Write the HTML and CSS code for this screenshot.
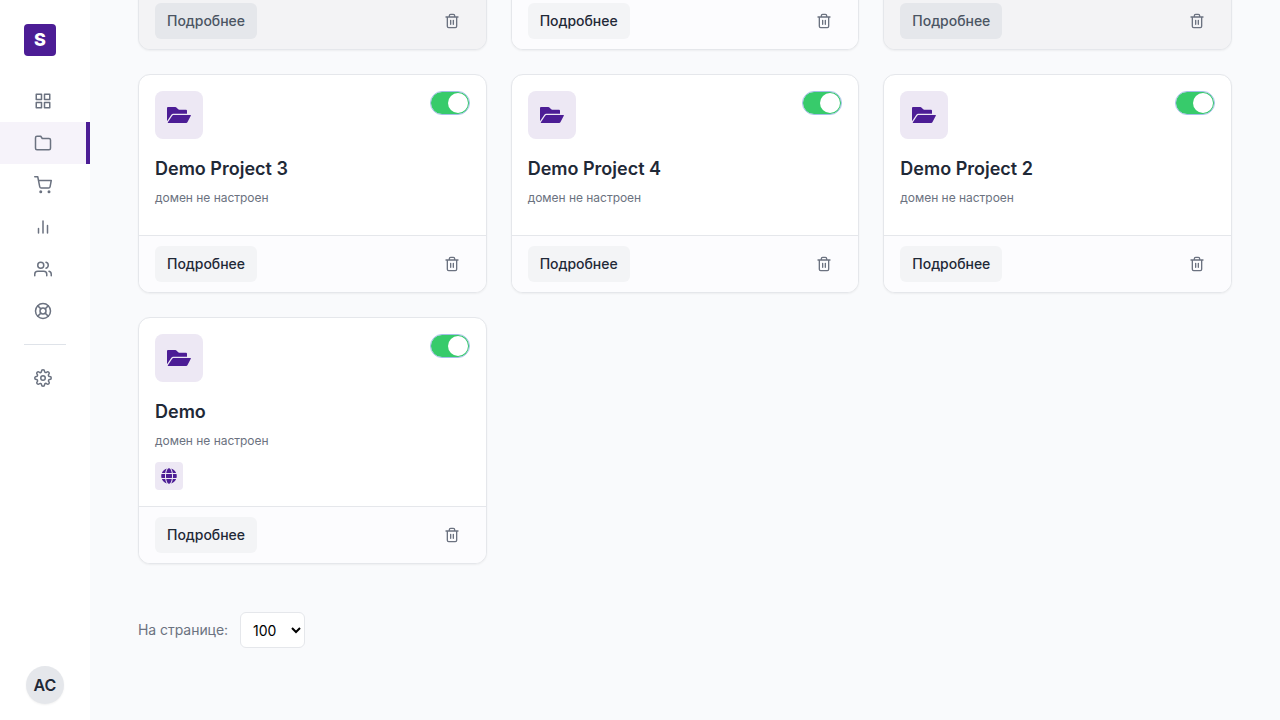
FILE: index.html
```html
<!DOCTYPE html>
<html lang="ru">
<head>
<meta charset="utf-8">
<title>Проекты</title>
<link rel="stylesheet" href="styles.css">
</head>
<body>
<svg class="sprite" aria-hidden="true">
  <symbol id="grid" viewBox="0 0 24 24"><rect x="3" y="3" width="7" height="7"/><rect x="14" y="3" width="7" height="7"/><rect x="14" y="14" width="7" height="7"/><rect x="3" y="14" width="7" height="7"/></symbol>
  <symbol id="folder" viewBox="0 0 24 24"><path d="M22 19a2 2 0 0 1-2 2H4a2 2 0 0 1-2-2V5a2 2 0 0 1 2-2h5l2 3h9a2 2 0 0 1 2 2z"/></symbol>
  <symbol id="cart" viewBox="0 0 24 24"><circle cx="9" cy="21" r="1"/><circle cx="20" cy="21" r="1"/><path d="M1 1h4l2.68 13.39a2 2 0 0 0 2 1.61h9.72a2 2 0 0 0 2-1.61L23 6H6"/></symbol>
  <symbol id="bars" viewBox="0 0 24 24"><path d="M18 20V10M12 20V4M6 20v-6"/></symbol>
  <symbol id="users" viewBox="0 0 24 24"><path d="M17 21v-2a4 4 0 0 0-4-4H5a4 4 0 0 0-4 4v2"/><circle cx="9" cy="7" r="4"/><path d="M23 21v-2a4 4 0 0 0-3-3.87M16 3.13a4 4 0 0 1 0 7.75"/></symbol>
  <symbol id="help" viewBox="0 0 24 24"><circle cx="12" cy="12" r="10"/><circle cx="12" cy="12" r="4"/><path d="M4.93 4.93l4.24 4.24M14.83 14.83l4.24 4.24M14.83 9.17l4.24-4.24M4.93 19.07l4.24-4.24"/></symbol>
  <symbol id="gear" viewBox="0 0 24 24"><circle cx="12" cy="12" r="3"/><path d="M19.4 15a1.65 1.65 0 0 0 .33 1.82l.06.06a2 2 0 0 1 0 2.83 2 2 0 0 1-2.83 0l-.06-.06a1.65 1.65 0 0 0-1.82-.33 1.65 1.65 0 0 0-1 1.51V21a2 2 0 0 1-2 2 2 2 0 0 1-2-2v-.09A1.65 1.65 0 0 0 9 19.4a1.65 1.65 0 0 0-1.82.33l-.06.06a2 2 0 0 1-2.83 0 2 2 0 0 1 0-2.83l.06-.06a1.65 1.65 0 0 0 .33-1.82 1.65 1.65 0 0 0-1.51-1H3a2 2 0 0 1-2-2 2 2 0 0 1 2-2h.09A1.65 1.65 0 0 0 4.6 9a1.65 1.65 0 0 0-.33-1.82l-.06-.06a2 2 0 0 1 0-2.83 2 2 0 0 1 2.83 0l.06.06a1.65 1.65 0 0 0 1.82.33H9a1.65 1.65 0 0 0 1-1.51V3a2 2 0 0 1 2-2 2 2 0 0 1 2 2v.09a1.65 1.65 0 0 0 1 1.51 1.65 1.65 0 0 0 1.82-.33l.06-.06a2 2 0 0 1 2.83 0 2 2 0 0 1 0 2.83l-.06.06a1.65 1.65 0 0 0-.33 1.82V9a1.65 1.65 0 0 0 1.51 1H21a2 2 0 0 1 2 2 2 2 0 0 1-2 2h-.09a1.65 1.65 0 0 0-1.51 1z"/></symbol>
  <symbol id="trash" viewBox="0 0 24 24"><path d="M3 6h18M19 6v14a2 2 0 0 1-2 2H7a2 2 0 0 1-2-2V6m3 0V4a2 2 0 0 1 2-2h4a2 2 0 0 1 2 2v2M10 11v6M14 11v6"/></symbol>
  <symbol id="folder-open" viewBox="0 0 24 16"><path d="M0 14.2V1Q0 0 1 0H8.4Q9 0 9.4.4L11.2 2.3Q11.6 2.7 12.2 2.7H19Q20 2.700 20 3.700V6.800H6.300Q4.900 6.800 4.200 7.900ZM5.200 8.700Q5.600 8 6.400 8H23.400Q24.200 8 23.800 8.800L20.400 15.300Q20 16 19.200 16H1.300Q.5 16 .9 15.300Z"/></symbol>
  <symbol id="globe" viewBox="0 0 496 512"><path d="M336.5 160C322 70.7 287.8 8 248 8s-74 62.7-88.500 152h177zM152 256c0 22.200 1.200 43.500 3.300 64h185.300c2.100-20.500 3.300-41.800 3.300-64s-1.200-43.500-3.300-64H155.300c-2.100 20.500-3.300 41.800-3.300 64zm324.700-96c-28.600-67.900-86.500-120.400-158-141.600 24.400 33.800 41.200 84.700 50 141.600h108zM177.200 18.400C105.800 39.600 47.800 92.100 19.300 160h108c8.700-56.900 25.500-107.800 49.900-141.600zM487.400 192H372.700c2.100 21 3.300 42.500 3.300 64s-1.200 43-3.300 64h114.600c5.500-20.500 8.600-41.800 8.600-64s-3.100-43.500-8.500-64zM120 256c0-21.500 1.200-43 3.300-64H8.600C3.200 212.500 0 233.800 0 256s3.200 43.500 8.600 64h114.600c-2-21-3.200-42.500-3.200-64zm39.500 96c14.500 89.300 48.700 152 88.500 152s74-62.700 88.500-152h-177zm159.300 141.600c71.400-21.200 129.400-73.700 158-141.600h-108c-8.800 56.900-25.600 107.800-50 141.600zM19.300 352c28.600 67.900 86.500 120.400 158 141.600-24.400-33.800-41.200-84.700-50-141.600h-108z"/></symbol>
</svg>
<div class="app">
  <aside class="sidebar">
    <div class="logo">S</div>
    <nav class="nav">
      <a class="nav-item"><svg class="line-icon"><use href="#grid"/></svg></a>
      <a class="nav-item active"><svg class="line-icon"><use href="#folder"/></svg></a>
      <a class="nav-item"><svg class="line-icon"><use href="#cart"/></svg></a>
      <a class="nav-item"><svg class="line-icon"><use href="#bars"/></svg></a>
      <a class="nav-item"><svg class="line-icon"><use href="#users"/></svg></a>
      <a class="nav-item"><svg class="line-icon"><use href="#help"/></svg></a>
      <hr class="divider">
      <a class="nav-item"><svg class="line-icon"><use href="#gear"/></svg></a>
    </nav>
    <div class="avatar">AC</div>
  </aside>
  <main class="main">
    <section class="cards">
      <article class="card disabled">
        <div class="card-body"></div>
        <footer class="card-footer"><button class="more">Подробнее</button><button class="remove"><svg class="line-icon small"><use href="#trash"/></svg></button></footer>
      </article>
      <article class="card">
        <div class="card-body"></div>
        <footer class="card-footer"><button class="more">Подробнее</button><button class="remove"><svg class="line-icon small"><use href="#trash"/></svg></button></footer>
      </article>
      <article class="card disabled">
        <div class="card-body"></div>
        <footer class="card-footer"><button class="more">Подробнее</button><button class="remove"><svg class="line-icon small"><use href="#trash"/></svg></button></footer>
      </article>
      <article class="card">
        <div class="card-body">
          <div class="card-top"><div class="tile"><svg><use href="#folder-open"/></svg></div><span class="switch"></span></div>
          <h3 class="title">Demo Project 3</h3>
          <p class="domain">домен не настроен</p>
        </div>
        <footer class="card-footer"><button class="more">Подробнее</button><button class="remove"><svg class="line-icon small"><use href="#trash"/></svg></button></footer>
      </article>
      <article class="card">
        <div class="card-body">
          <div class="card-top"><div class="tile"><svg><use href="#folder-open"/></svg></div><span class="switch"></span></div>
          <h3 class="title">Demo Project 4</h3>
          <p class="domain">домен не настроен</p>
        </div>
        <footer class="card-footer"><button class="more">Подробнее</button><button class="remove"><svg class="line-icon small"><use href="#trash"/></svg></button></footer>
      </article>
      <article class="card">
        <div class="card-body">
          <div class="card-top"><div class="tile"><svg><use href="#folder-open"/></svg></div><span class="switch"></span></div>
          <h3 class="title">Demo Project 2</h3>
          <p class="domain">домен не настроен</p>
        </div>
        <footer class="card-footer"><button class="more">Подробнее</button><button class="remove"><svg class="line-icon small"><use href="#trash"/></svg></button></footer>
      </article>
      <article class="card">
        <div class="card-body">
          <div class="card-top"><div class="tile"><svg><use href="#folder-open"/></svg></div><span class="switch"></span></div>
          <h3 class="title">Demo</h3>
          <p class="domain">домен не настроен</p>
          <div class="badge"><svg><use href="#globe"/></svg></div>
        </div>
        <footer class="card-footer"><button class="more">Подробнее</button><button class="remove"><svg class="line-icon small"><use href="#trash"/></svg></button></footer>
      </article>
    </section>
    <div class="pager">
      <label for="per-page">На странице:</label>
      <select id="per-page" class="per-page"><option>100</option></select>
    </div>
  </main>
</div>
</body>
</html>
```
FILE: styles.css
```css
* { box-sizing: border-box; }
body {
  margin: 0;
  font-family: Inter, "Liberation Sans", sans-serif;
  color: #1f2937;
  background: #f9fafc;
}
button, select { font: inherit; }
.sprite { display: none; }
.app { display: flex; height: 720px; overflow: hidden; }

.sidebar {
  width: 90px;
  flex: none;
  display: flex;
  flex-direction: column;
  align-items: center;
  padding: 24px 0 16px;
  background: #fff;
}
.logo {
  width: 32px;
  height: 32px;
  margin: 0 0 24px 24px;
  align-self: flex-start;
  border-radius: 4px;
  background: #4c1d95;
  color: #fff;
  font-size: 18px;
  font-weight: 800;
  line-height: 32px;
  text-align: center;
}
.nav { width: 100%; flex: 1; }
.nav-item {
  display: flex;
  align-items: center;
  height: 42px;
  padding-left: 34px;
  color: #6b7280;
  border-right: 4px solid transparent;
}
.nav-item.active { background: #f6f3fa; border-right-color: #4c1d95; }
.line-icon {
  width: 18px;
  height: 18px;
  fill: none;
  stroke: currentColor;
  stroke-width: 2;
  stroke-linecap: round;
  stroke-linejoin: round;
}
.line-icon.small { width: 16px; height: 16px; }
.divider {
  width: 42px;
  margin: 12px 24px;
  border: 0;
  border-top: 1px solid #dfe3e9;
}
.avatar {
  width: 38px;
  height: 38px;
  border-radius: 50%;
  background: #e5e7eb;
  box-shadow: 0 1px 2px rgba(0, 0, 0, .06);
  font-size: 16px;
  font-weight: 600;
  line-height: 38px;
  text-align: center;
}

.main { flex: 1; padding: 0 48px; overflow: hidden; }
.cards {
  display: grid;
  grid-template-columns: repeat(3, 1fr);
  gap: 24px;
  margin-top: -169px;
}
.card {
  display: flex;
  flex-direction: column;
  border: 1px solid #e5e7eb;
  border-radius: 12px;
  background: #fff;
  box-shadow: 0 1px 2px rgba(0, 0, 0, .05);
  overflow: hidden;
}
.card-body { min-height: 160px; flex: 1; padding: 16px; }
.card-top { display: flex; justify-content: space-between; align-items: flex-start; }
.tile {
  width: 48px;
  height: 48px;
  display: grid;
  place-items: center;
  border-radius: 8px;
  background: #ede8f4;
  color: #4c1d95;
}
.tile svg { width: 24px; height: 16px; fill: currentColor; }
.switch {
  width: 40px;
  height: 24px;
  display: flex;
  justify-content: flex-end;
  padding: 1px;
  border: 1px solid #a3bfe6;
  border-radius: 12px;
  background: #37cb6b;
  background-clip: padding-box;
}
.switch::after { content: ""; width: 20px; height: 20px; border-radius: 50%; background: #fff; }
.title { margin: 16px 0 7px; font-size: 18px; font-weight: 600; line-height: 28px; }
.domain { margin: 0; font-size: 12px; line-height: 16px; letter-spacing: -.03px; color: #6b7280; }
.badge {
  width: 28px;
  height: 28px;
  display: grid;
  place-items: center;
  margin-top: 13px;
  border-radius: 4px;
  background: #ede8f4;
  color: #4c1d95;
}
.badge svg { width: 16px; height: 16px; fill: currentColor; }
.card-footer {
  display: flex;
  justify-content: space-between;
  align-items: center;
  height: 57px;
  padding: 0 16px;
  border-top: 1px solid #e5e7eb;
  background: #fcfcfe;
}
.more {
  height: 36px;
  padding: 0 12px 2px;
  border: 0;
  border-radius: 6px;
  background: #f3f4f6;
  color: #1f2937;
  font-size: 14px;
  font-weight: 500;
  letter-spacing: -.03px;
}
.remove {
  width: 36px;
  height: 36px;
  display: grid;
  place-items: center;
  padding: 0;
  border: 0;
  background: none;
  color: #6b7280;
}
.disabled, .disabled .card-footer { background: #f3f3f5; }
.disabled .more { background: #e5e7eb; color: #4b5563; }

.pager {
  display: flex;
  align-items: center;
  gap: 12px;
  margin-top: 48px;
  font-size: 14px;
  color: #6b7280;
}
.pager label { padding-bottom: 2px; letter-spacing: -.05px; }
.per-page {
  width: 65px;
  height: 36px;
  padding: 0 0 0 8px;
  border: 1px solid #e5e7eb;
  border-radius: 6px;
  background: #fff;
  color: #000;
}
```
